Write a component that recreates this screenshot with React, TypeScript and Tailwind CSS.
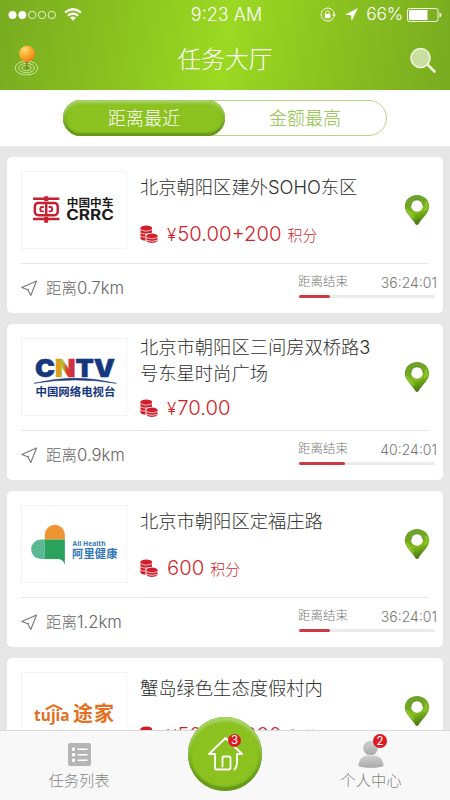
import React, { useState } from 'react';

type Task = {
  id: number;
  title: string[];
  yen?: boolean;
  amount: string;
  points?: boolean;
  distance: string;
  left: string;
  progress: number;
  Logo: () => React.ReactElement;
};

const CrrcLogo = () => (
  <svg viewBox="0 0 106 78" className="w-full h-full">
    <g fill="none" stroke="#c5202f" strokeWidth="2.500">
      <path d="M11 27.500h27M11 48.300h27" strokeWidth="2.600" />
      <path d="M24.500 25v5M24.500 46v6" strokeWidth="4" />
      <rect x="12.800" y="31.800" width="23.500" height="12.500" rx="3.500" />
      <path d="M22 35.900h-2q-1.500 0-1.500 1.500v1.500q0 1.500 1.500 1.500h2M27 35.900h2q1.500 0 1.500 1.500v1.500q0 1.500-1.500 1.500h-2" strokeWidth="2" />
      <path d="M24.500 31v14" />
    </g>
    <text x="45.500" y="35.500" fontSize="11.500" fontWeight="700" fill="#1d1a1b" textLength="48" lengthAdjust="spacingAndGlyphs">中国中车</text>
    <text x="45" y="49.300" fontSize="14.500" fontWeight="700" fill="#1d1a1b" fontFamily="Inter, sans-serif" textLength="49" lengthAdjust="spacingAndGlyphs">CRRC</text>
  </svg>
);

const CntvLogo = () => (
  <svg viewBox="0 0 106 78" className="w-full h-full">
    <defs>
      <linearGradient id="cntv" x1="0" x2="1">
        <stop offset="0" stopColor="#16377c" />
        <stop offset=".26" stopColor="#16377c" />
        <stop offset=".26" stopColor="#f08c1e" />
        <stop offset=".35" stopColor="#b6c02b" />
        <stop offset=".4" stopColor="#d93a2f" />
        <stop offset=".51" stopColor="#c42b4e" />
        <stop offset=".51" stopColor="#16377c" />
        <stop offset="1" stopColor="#16377c" />
      </linearGradient>
    </defs>
    <text x="13" y="39.300" fontSize="25" fontWeight="900" fill="url(#cntv)" stroke="url(#cntv)" strokeWidth=".5" fontFamily="Inter, sans-serif" textLength="82" lengthAdjust="spacingAndGlyphs">CNTV</text>
    <path d="M12 45.500Q54 35 96.500 45.500Q54 38.500 12 45.500Z" fill="#16377c" stroke="#16377c" strokeWidth=".5" />
    <text x="13.500" y="59" fontSize="11.500" fontWeight="700" fill="#16377c" textLength="82" lengthAdjust="spacingAndGlyphs">中国网络电视台</text>
  </svg>
);

const AliLogo = () => (
  <svg viewBox="0 0 106 78" className="w-full h-full">
    <path d="M23 34.500v-5a10.300 10.300 0 0 1 20.600 0v5z" fill="#ee9433" />
    <path d="M23 34.500h-4a10 10 0 0 0 0 20h4z" fill="#5bb894" />
    <path d="M23 34.500h20.600v25.500q-2-5.500-8-5.500h-12.600z" fill="#2ba25b" />
    <text x="51.500" y="41.500" fontSize="7.800" fontWeight="700" fill="#3277b5" fontFamily="Open Sans, sans-serif" textLength="34" lengthAdjust="spacingAndGlyphs">Ali Health</text>
    <text x="51" y="53" fontSize="11.500" fontWeight="700" fill="#3277b5" textLength="46.500">阿里健康</text>
  </svg>
);

const TujiaLogo = () => (
  <svg viewBox="0 0 106 78" className="w-full h-full">
    <text x="12" y="49.500" fontSize="17" fontWeight="700" fill="#e2701f" fontFamily="Open Sans, sans-serif" textLength="36.500" lengthAdjust="spacingAndGlyphs">tujia</text>
    <path d="M24 37.500l8-4.500l9 4.500" fill="none" stroke="#e2701f" strokeWidth="2.200" />
    <text x="52" y="49" fontSize="20.500" fontWeight="700" fill="#e2701f" textLength="42">途家</text>
  </svg>
);

const tasks: Task[] = [
  { id: 1, title: ['北京朝阳区建外SOHO东区'], yen: true, amount: '50.00+200', points: true, distance: '0.7km', left: '36:24:01', progress: 23, Logo: CrrcLogo },
  { id: 2, title: ['北京市朝阳区三间房双桥路3', '号东星时尚广场'], yen: true, amount: '70.00', distance: '0.9km', left: '40:24:01', progress: 34, Logo: CntvLogo },
  { id: 3, title: ['北京市朝阳区定福庄路'], amount: '600', points: true, distance: '1.2km', left: '36:24:01', progress: 23, Logo: AliLogo },
  { id: 4, title: ['蟹岛绿色生态度假村内'], yen: true, amount: '50.00+200', points: true, distance: '', left: '', progress: 23, Logo: TujiaLogo },
];

const CoinsIcon = () => (
  <svg viewBox="0 0 18 19" className="w-[18px] h-[19px] shrink-0">
    <path d="M0.500 3v11q1.500 1.800 5 1.800V9.500q2-1.800 6.500-1.800V3z" fill="#cf1f2a" />
    <ellipse cx="6.300" cy="3" rx="5.800" ry="2.500" fill="#cf1f2a" />
    <path d="M6.500 11v5q1.500 2 5.300 2t5.700-2v-5z" fill="#cf1f2a" />
    <ellipse cx="12" cy="11" rx="5.500" ry="2.500" fill="#cf1f2a" />
    <path d="M0.500 4.800q5.500 3 11.500 0M.5 7.800q3.500 2 7 1M.5 11q2 1.200 5 1.200M6.500 12.600q5.500 2.500 11 0M6.500 15.200q5.500 2.500 11 0" fill="none" stroke="#fff" strokeWidth=".7" />
  </svg>
);

const PinIcon = () => (
  <svg viewBox="0 0 26 32" className="w-[26px] h-8">
    <defs>
      <linearGradient id="pin" x1="0" y1="0" x2=".3" y2="1">
        <stop offset="0" stopColor="#6d9d35" />
        <stop offset=".4" stopColor="#70a81f" />
        <stop offset=".65" stopColor="#82bd1c" />
        <stop offset="1" stopColor="#4c7c10" />
      </linearGradient>
    </defs>
    <path d="M13 1C6 1 .8 6 .8 12.600C.8 19.500 8.500 24.500 11.500 30.300q1.500 1.600 3 0C17.500 24.500 25.200 19.500 25.200 12.600C25.200 6 20 1 13 1z" fill="url(#pin)" />
    <path d="M3 15q2 5 7 9.500M21.500 8q2.500 5-1 9" fill="none" stroke="#9bcf45" strokeWidth="1.500" opacity=".7" />
    <circle cx="13" cy="11.800" r="6" fill="#fff" />
    <path d="M7 11.800a6 6 0 0 1 12 0" fill="none" stroke="#527f1a" strokeWidth=".8" />
  </svg>
);

const TaskCard = ({ task }: { task: Task }) => {
  const { Logo } = task;
  const single = task.title.length === 1;

  return (
    <div className="h-[156px] shrink-0 bg-white rounded-[5px]">
      <div className="h-[106px] ml-3.5 mr-2 flex">
        <div className="mt-3.5 w-[106px] h-[78px] border border-[#f3f3f3] shrink-0">
          <Logo />
        </div>
        <div className={`ml-[13px] flex-1 ${single ? 'pt-[17px]' : 'pt-[10px]'}`}>
          {task.title.map((line) => (
            <p key={line} className="text-[18.3px] leading-[26px] text-[#2e2e2e] whitespace-nowrap">{line}</p>
          ))}
          <div className={`flex items-center h-[30px] text-[#cf1f2a] ${single ? 'mt-[19px]' : 'mt-[7px]'}`}>
            <CoinsIcon />
            <p className="ml-[9px] flex items-baseline whitespace-nowrap">
              {task.yen && <span className="text-[17px] mr-px">¥</span>}
              <span className="text-[20.3px]">{task.amount}</span>
              {task.points && <span className="ml-1.5 text-[15px]">积分</span>}
            </p>
          </div>
        </div>
        <div className="w-[26px] pt-[37px] mr-[5px]">
          <PinIcon />
        </div>
      </div>
      {task.distance && (
        <div className="ml-3.5 w-[408px] border-t border-[#e6e6e6] flex justify-between">
          <div className="flex items-center h-[49px] text-[#666]">
            <svg viewBox="0 0 17 17" className="w-[17px] h-[17px]" fill="none" stroke="#777" strokeWidth="1.100" strokeLinejoin="round">
              <path d="M15.500 1L.8 7.500l6 2.300l3 5.700z" />
              <path d="M6.800 9.800l1-1" />
            </svg>
            <p className="ml-2 text-[15.5px]">距离<span className="text-[16.7px]">{task.distance}</span></p>
          </div>
          <div className="w-[139px] -mr-2 pt-[9px] shrink-0">
            <div className="flex justify-between items-center h-[19px] text-[#777]">
              <span className="text-[12.5px]">距离结束</span>
              <span className="text-[14px]">{task.left}</span>
            </div>
            <div className="mt-[3px] ml-px mr-0.5 h-[3px] bg-[#ebebeb] rounded-full">
              <div className="h-full bg-[#cc3a44] rounded-full" style={{ width: `${task.progress}%` }} />
            </div>
          </div>
        </div>
      )}
    </div>
  );
};

const StatusBar = () => (
  <div className="relative h-[29px] flex items-center justify-between pl-2 pr-[8px] text-white text-[17.5px]">
    <div className="flex items-center gap-0.5">
      <svg viewBox="0 0 50 10" className="w-[50px] h-2.5" fill="none" stroke="#fff" strokeWidth=".8">
        <circle cx="4.500" cy="5" r="3.700" fill="#fff" />
        <circle cx="14.300" cy="5" r="3.700" fill="#fff" />
        <circle cx="24.200" cy="5" r="3.700" />
        <circle cx="34" cy="5" r="3.700" />
        <circle cx="43.800" cy="5" r="3.700" />
      </svg>
      <svg viewBox="0 0 18 13" className="ml-1 w-[18px] h-[13px]" fill="none" stroke="#fff" strokeWidth="2.200">
        <path d="M1 4.500q8-6.500 16 0M3.800 7.700q5.200-4 10.400 0" />
        <path d="M6 9.600q3-2.200 6 0l-3 3.200z" fill="#fff" stroke="none" />
      </svg>
    </div>
    <p className="absolute left-0 right-0 text-center pl-[3px] text-[18px]">9:23 AM</p>
    <div className="flex items-center">
      <svg viewBox="0 0 16 16" className="w-4 h-4" fill="none" stroke="#fff">
        <path d="M13.500 10.500a6.500 6.500 0 1 1 .7-3" />
        <path d="M12 7.500h4l-2 2.500z" fill="#fff" stroke="none" />
        <rect x="4.800" y="7" width="5.500" height="4.200" fill="#fff" stroke="none" />
        <path d="M5.800 7V5.700a1.700 1.700 0 0 1 3.500 0V7" />
      </svg>
      <svg viewBox="0 0 13 13" className="ml-[9px] w-[13px] h-[13px]" fill="#fff">
        <path d="M13 0L0 6.800l6 .5l.7 5.700z" />
      </svg>
      <span className="ml-2 text-[17.5px] tracking-[-0.2px]">66%</span>
      <svg viewBox="0 0 35 14" className="ml-1 w-[35px] h-3.5">
        <rect x=".5" y=".5" width="30.500" height="13" rx="2" fill="none" stroke="#fff" strokeWidth=".9" />
        <rect x="2" y="2" width="18.500" height="10" rx=".5" fill="#fff" />
        <path d="M32.500 4.500q2 .8 2 2.500t-2 2.500z" fill="#fff" />
      </svg>
    </div>
  </div>
);

export default function App() {
  const [tab, setTab] = useState<'near' | 'top'>('near');
  const activeTab = 'w-[162px] bg-[#8bc220] text-white shadow-[inset_0_3px_3px_#a9d46a,inset_0_-3px_2px_#639618,inset_3px_0_3px_#7cb122,inset_-3px_0_3px_#7cb122]';
  const idleTab = 'flex-1 text-[#8bc03c]';

  return (
    <div className="w-[450px] h-[800px] overflow-hidden flex flex-col bg-[#e7e7e7] font-light font-[Inter,'Noto_Sans_CJK_SC',sans-serif]">
      <header className="h-[90px] shrink-0 bg-[linear-gradient(100deg,#78ab20_0%,#8bc220_27%,#9bd922_50%,#8bc220_73%,#78ab20_100%)]">
        <StatusBar />
        <div className="h-[61px] px-3 flex items-center justify-between">
          <svg viewBox="0 0 28 32" className="w-7 h-8">
            <defs>
              <radialGradient id="ball" cx=".35" cy=".25" r=".8">
                <stop offset="0" stopColor="#ffdc7a" />
                <stop offset=".5" stopColor="#faac2c" />
                <stop offset="1" stopColor="#ee7d12" />
              </radialGradient>
            </defs>
            <g fill="none" stroke="#d6eba4" strokeWidth=".9">
              <ellipse cx="14.500" cy="24" rx="11.300" ry="7" />
              <ellipse cx="14.500" cy="24" rx="7.800" ry="4.800" />
              <ellipse cx="14.500" cy="24" rx="4.500" ry="2.700" />
            </g>
            <path d="M14.800 16v9" stroke="#70754e" strokeWidth="1.500" />
            <circle cx="15" cy="9.800" r="8" fill="url(#ball)" />
          </svg>
          <h1 className="text-[23.7px] text-white">任务大厅</h1>
          <svg viewBox="0 0 28 28" className="w-7 h-7 mt-0.5" fill="none">
            <path d="M18.500 18.500l6 6" stroke="#eef7dc" strokeWidth="2.600" strokeLinecap="round" />
            <circle cx="10.500" cy="11" r="9.500" fill="#c9df9f" stroke="#eef7dc" strokeWidth="1.600" />
          </svg>
        </div>
      </header>

      <div className="h-14 shrink-0 bg-white flex justify-center pt-2.5">
        <div className="w-[324px] h-9 rounded-full border border-[#b5d587] flex text-[18px]">
          <button onClick={() => setTab('near')} className={`-m-px h-9 rounded-full ${tab === 'near' ? activeTab : idleTab}`}>距离最近</button>
          <button onClick={() => setTab('top')} className={`-m-px h-9 rounded-full ${tab === 'top' ? activeTab : idleTab}`}>金额最高</button>
        </div>
      </div>

      <main className="flex-1 min-h-0 overflow-hidden px-[7px] pt-[11px] flex flex-col gap-[11px]">
        {tasks.map((task) => (
          <TaskCard key={task.id} task={task} />
        ))}
      </main>

      <footer className="relative h-[70px] shrink-0 bg-[#f8f8f8] border-t border-[#d9d9d9] flex justify-between text-[15.3px] leading-[23px] text-[#858585]">
        <div className="w-[158px] pt-3 flex flex-col items-center">
          <svg viewBox="0 0 23 23" className="w-[23px] h-[23px]">
            <rect width="23" height="23" rx="2" fill="#b5b5b5" />
            <path d="M4 6.200h3M4 11.700h3M4 17.200h3" stroke="#fff" strokeWidth="3" />
            <path d="M9.500 6.200h10M9.500 11.700h10M9.500 17.200h10" stroke="#fff" strokeWidth="1.600" />
          </svg>
          <span className="mt-[3px]">任务列表</span>
        </div>
        <div className="w-[158px] pt-[9px] flex flex-col items-center">
          <div className="relative">
            <svg viewBox="0 0 26 28" className="w-[26px] h-7">
              <defs>
                <linearGradient id="user" x1="0" y1="0" x2="0" y2="1">
                  <stop offset="0" stopColor="#d2d2d2" />
                  <stop offset="1" stopColor="#a9a9a9" />
                </linearGradient>
              </defs>
              <path d="M.5 26q0-11 12.500-11t12.500 11q-3 1.800-12.500 1.800T.5 26z" fill="url(#user)" />
              <circle cx="12.500" cy="8" r="7.700" fill="url(#user)" stroke="#f8f8f8" strokeWidth=".8" />
            </svg>
            <span className="absolute -top-[6px] left-[15px] w-[14px] h-[14px] rounded-full bg-[#da1c23] text-white text-[11.5px] leading-[14px] text-center font-normal">2</span>
          </div>
          <span className="mt-px">个人中心</span>
        </div>
        <button className="absolute left-[188px] -top-[14px] w-[74px] h-[74px] rounded-full bg-[#8bc220] shadow-[inset_0_4px_3px_#a9d46a,inset_0_-4px_2px_#659a1a,inset_3px_0_3px_#7eb421,inset_-3px_0_3px_#7eb421] flex items-center justify-center">
          <svg viewBox="0 0 36 36" className="w-9 h-9" fill="none" stroke="#fff" strokeWidth="1.800" strokeLinecap="round" strokeLinejoin="round">
            <path d="M15.500 30.500V21.500q0-1 1-1h5.500q1.500 0 1.500 1.500v10q0 1.500-1.500 1.500H9.500q-1.500 0-1.500-1.500V18H2L18.500 2L35 18H30v9q0 4-2.500 6.500" />
          </svg>
          <span className="absolute top-[17px] left-[40px] w-[13px] h-[13px] rounded-full bg-[#da1c23] text-white text-[11.5px] leading-[13px] text-center font-normal">3</span>
        </button>
      </footer>
    </div>
  );
}
